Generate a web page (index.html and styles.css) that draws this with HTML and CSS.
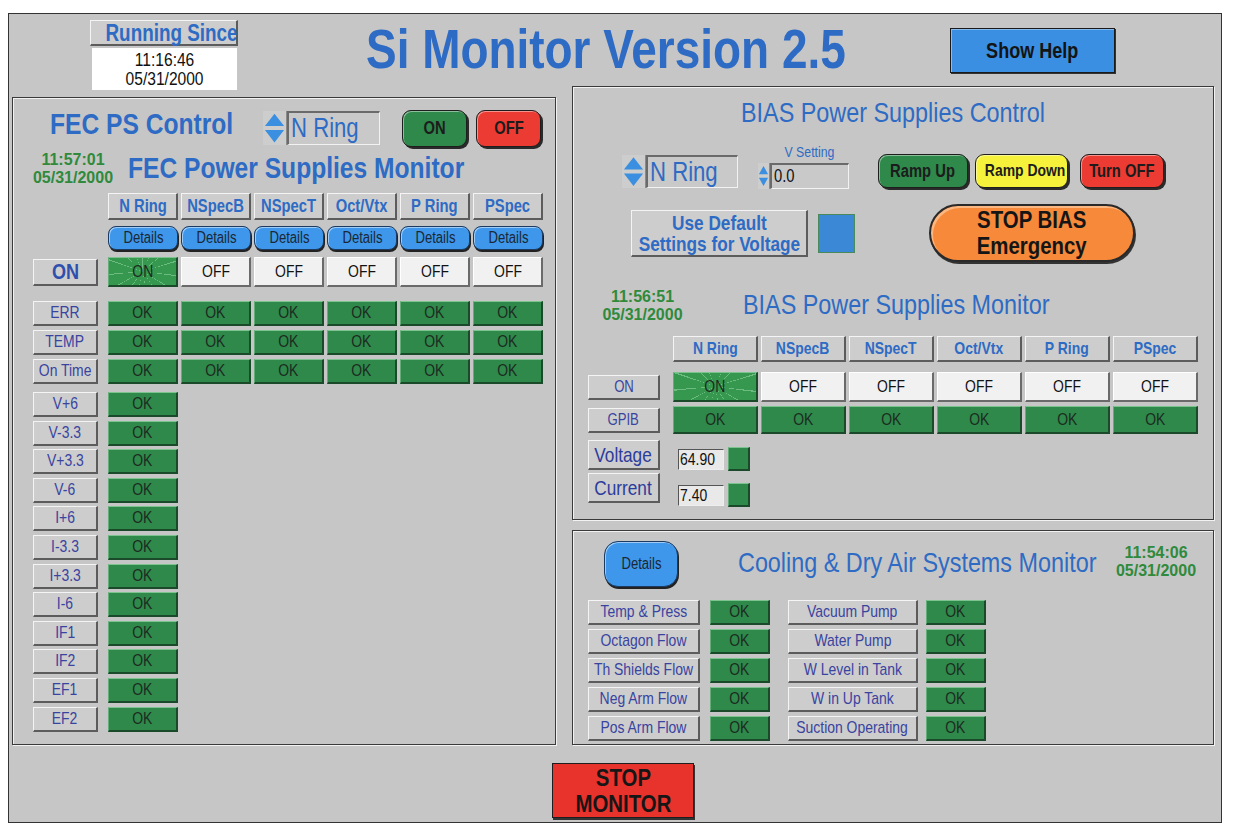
FILE: index.html
```html
<!DOCTYPE html>
<html lang="en">
<head>
    <meta charset="UTF-8">
    <meta name="viewport" content="width=device-width, initial-scale=1.0">
    <title>Si Monitor Version 2.5</title>
    <link rel="stylesheet" href="styles.css">
</head>
<body>
<div class="screen">
    <header class="top">
        <div class="since">
            <div class="since-label"><span class="n">Running Since</span></div>
            <div class="since-time"><span class="n">11:16:46<br>05/31/2000</span></div>
        </div>
        <h1 class="title">Si Monitor Version 2.5</h1>
        <button class="help-btn"><span class="n">Show Help</span></button>
    </header>

    <div class="main">
        <!-- FEC power supplies -->
        <section class="panel fec">
            <div class="fec-control">
                <h2 class="heading">FEC PS Control</h2>
                <div class="selector">
                    <svg class="spin" viewBox="0 0 24 34" width="24" height="34"><path d="M12 2 L22 15 H2 Z" fill="#3b8fe0"/><path d="M2 19 H22 L12 32 Z" fill="#3b8fe0"/></svg>
                    <span class="field"><span class="n">N Ring</span></span>
                </div>
                <button class="pill green fec-on"><span class="n">ON</span></button>
                <button class="pill red fec-off"><span class="n">OFF</span></button>
            </div>

            <div class="monitor-head">
                <div class="stamp">11:57:01<br>05/31/2000</div>
                <h2 class="heading">FEC Power Supplies Monitor</h2>
            </div>

            <div class="ps-table">
                <div class="ps-row head-row">
                    <span></span>
                    <span class="col-head"><span class="n">N Ring</span></span>
                    <span class="col-head"><span class="n">NSpecB</span></span>
                    <span class="col-head"><span class="n">NSpecT</span></span>
                    <span class="col-head"><span class="n">Oct/Vtx</span></span>
                    <span class="col-head"><span class="n">P Ring</span></span>
                    <span class="col-head"><span class="n">PSpec</span></span>
                </div>
                <div class="ps-row details-row">
                    <span></span>
                    <button class="details"><span class="n">Details</span></button>
                    <button class="details"><span class="n">Details</span></button>
                    <button class="details"><span class="n">Details</span></button>
                    <button class="details"><span class="n">Details</span></button>
                    <button class="details"><span class="n">Details</span></button>
                    <button class="details"><span class="n">Details</span></button>
                </div>
                <div class="ps-row on-row">
                    <span class="tag on-tag"><span class="n">ON</span></span>
                    <span class="cell is-on"><span class="n">ON</span></span>
                    <span class="cell off"><span class="n">OFF</span></span>
                    <span class="cell off"><span class="n">OFF</span></span>
                    <span class="cell off"><span class="n">OFF</span></span>
                    <span class="cell off"><span class="n">OFF</span></span>
                    <span class="cell off"><span class="n">OFF</span></span>
                </div>
                <div class="status-rows">
                    <div class="ps-row">
                        <span class="tag"><span class="n">ERR</span></span>
                        <span class="cell ok"><span class="n">OK</span></span><span class="cell ok"><span class="n">OK</span></span><span class="cell ok"><span class="n">OK</span></span>
                        <span class="cell ok"><span class="n">OK</span></span><span class="cell ok"><span class="n">OK</span></span><span class="cell ok"><span class="n">OK</span></span>
                    </div>
                    <div class="ps-row">
                        <span class="tag"><span class="n">TEMP</span></span>
                        <span class="cell ok"><span class="n">OK</span></span><span class="cell ok"><span class="n">OK</span></span><span class="cell ok"><span class="n">OK</span></span>
                        <span class="cell ok"><span class="n">OK</span></span><span class="cell ok"><span class="n">OK</span></span><span class="cell ok"><span class="n">OK</span></span>
                    </div>
                    <div class="ps-row">
                        <span class="tag"><span class="n">On Time</span></span>
                        <span class="cell ok"><span class="n">OK</span></span><span class="cell ok"><span class="n">OK</span></span><span class="cell ok"><span class="n">OK</span></span>
                        <span class="cell ok"><span class="n">OK</span></span><span class="cell ok"><span class="n">OK</span></span><span class="cell ok"><span class="n">OK</span></span>
                    </div>
                </div>
                <div class="volt-rows">
                    <div class="ps-row"><span class="tag"><span class="n">V+6</span></span><span class="cell ok"><span class="n">OK</span></span></div>
                    <div class="ps-row"><span class="tag"><span class="n">V-3.3</span></span><span class="cell ok"><span class="n">OK</span></span></div>
                    <div class="ps-row"><span class="tag"><span class="n">V+3.3</span></span><span class="cell ok"><span class="n">OK</span></span></div>
                    <div class="ps-row"><span class="tag"><span class="n">V-6</span></span><span class="cell ok"><span class="n">OK</span></span></div>
                    <div class="ps-row"><span class="tag"><span class="n">I+6</span></span><span class="cell ok"><span class="n">OK</span></span></div>
                    <div class="ps-row"><span class="tag"><span class="n">I-3.3</span></span><span class="cell ok"><span class="n">OK</span></span></div>
                    <div class="ps-row"><span class="tag"><span class="n">I+3.3</span></span><span class="cell ok"><span class="n">OK</span></span></div>
                    <div class="ps-row"><span class="tag"><span class="n">I-6</span></span><span class="cell ok"><span class="n">OK</span></span></div>
                    <div class="ps-row"><span class="tag"><span class="n">IF1</span></span><span class="cell ok"><span class="n">OK</span></span></div>
                    <div class="ps-row"><span class="tag"><span class="n">IF2</span></span><span class="cell ok"><span class="n">OK</span></span></div>
                    <div class="ps-row"><span class="tag"><span class="n">EF1</span></span><span class="cell ok"><span class="n">OK</span></span></div>
                    <div class="ps-row"><span class="tag"><span class="n">EF2</span></span><span class="cell ok"><span class="n">OK</span></span></div>
                </div>
            </div>
        </section>

        <div class="right">
            <!-- BIAS power supplies -->
            <section class="panel bias">
                <h2 class="heading light center">BIAS Power Supplies Control</h2>

                <div class="bias-control">
                    <div class="selector bias-select">
                        <svg class="spin" viewBox="0 0 24 34" width="24" height="33"><path d="M12 2 L22 15 H2 Z" fill="#3b8fe0"/><path d="M2 19 H22 L12 32 Z" fill="#3b8fe0"/></svg>
                        <span class="field"><span class="n">N Ring</span></span>
                    </div>
                    <div class="vset">
                        <div class="vset-label"><span class="n">V Setting</span></div>
                        <div class="vset-input">
                            <svg class="spin small" viewBox="0 0 12 26" width="12" height="26"><path d="M6 2 L11 11 H1 Z" fill="#3b8fe0"/><path d="M1 15 H11 L6 24 Z" fill="#3b8fe0"/></svg>
                            <span class="field small"><span class="n">0.0</span></span>
                        </div>
                    </div>
                    <button class="pill green ramp-up"><span class="n">Ramp Up</span></button>
                    <button class="pill yellow ramp-down"><span class="n">Ramp Down</span></button>
                    <button class="pill red turn-off"><span class="n">Turn OFF</span></button>
                </div>

                <div class="bias-actions">
                    <div class="tag defaults"><span class="n">Use Default<br>Settings for Voltage</span></div>
                    <span class="check"></span>
                    <button class="stop-bias"><span class="n">STOP BIAS<br>Emergency</span></button>
                </div>

                <div class="monitor-head bias-head">
                    <div class="stamp">11:56:51<br>05/31/2000</div>
                    <h2 class="heading light">BIAS Power Supplies Monitor</h2>
                </div>

                <div class="bias-table">
                    <div class="bias-row head-row">
                        <span></span>
                        <span class="col-head"><span class="n">N Ring</span></span>
                        <span class="col-head"><span class="n">NSpecB</span></span>
                        <span class="col-head"><span class="n">NSpecT</span></span>
                        <span class="col-head"><span class="n">Oct/Vtx</span></span>
                        <span class="col-head"><span class="n">P Ring</span></span>
                        <span class="col-head"><span class="n">PSpec</span></span>
                    </div>
                    <div class="bias-row on-row">
                        <span class="tag"><span class="n">ON</span></span>
                        <span class="cell is-on"><span class="n">ON</span></span>
                        <span class="cell off"><span class="n">OFF</span></span>
                        <span class="cell off"><span class="n">OFF</span></span>
                        <span class="cell off"><span class="n">OFF</span></span>
                        <span class="cell off"><span class="n">OFF</span></span>
                        <span class="cell off"><span class="n">OFF</span></span>
                    </div>
                    <div class="bias-row gpib-row">
                        <span class="tag"><span class="n">GPIB</span></span>
                        <span class="cell ok"><span class="n">OK</span></span><span class="cell ok"><span class="n">OK</span></span><span class="cell ok"><span class="n">OK</span></span>
                        <span class="cell ok"><span class="n">OK</span></span><span class="cell ok"><span class="n">OK</span></span><span class="cell ok"><span class="n">OK</span></span>
                    </div>
                </div>

                <div class="reading voltage">
                    <span class="tag big-tag"><span class="n">Voltage</span></span>
                    <span class="value"><span class="n">64.90</span></span>
                    <span class="led"></span>
                </div>
                <div class="reading current">
                    <span class="tag big-tag"><span class="n">Current</span></span>
                    <span class="value"><span class="n">7.40</span></span>
                    <span class="led"></span>
                </div>
            </section>

            <!-- cooling and dry air -->
            <section class="panel cooling">
                <div class="cool-head">
                    <button class="details big-details"><span class="n">Details</span></button>
                    <h2 class="heading light cool-title">Cooling &amp; Dry Air Systems Monitor</h2>
                    <div class="stamp">11:54:06<br>05/31/2000</div>
                </div>
                <div class="cool-rows">
                    <div class="cool-row">
                        <span class="tag c1"><span class="n">Temp &amp; Press</span></span><span class="cell ok"><span class="n">OK</span></span>
                        <span class="tag c2"><span class="n">Vacuum Pump</span></span><span class="cell ok"><span class="n">OK</span></span>
                    </div>
                    <div class="cool-row">
                        <span class="tag c1"><span class="n">Octagon Flow</span></span><span class="cell ok"><span class="n">OK</span></span>
                        <span class="tag c2"><span class="n">Water Pump</span></span><span class="cell ok"><span class="n">OK</span></span>
                    </div>
                    <div class="cool-row">
                        <span class="tag c1"><span class="n">Th Shields Flow</span></span><span class="cell ok"><span class="n">OK</span></span>
                        <span class="tag c2"><span class="n">W Level in Tank</span></span><span class="cell ok"><span class="n">OK</span></span>
                    </div>
                    <div class="cool-row">
                        <span class="tag c1"><span class="n">Neg Arm Flow</span></span><span class="cell ok"><span class="n">OK</span></span>
                        <span class="tag c2"><span class="n">W in Up Tank</span></span><span class="cell ok"><span class="n">OK</span></span>
                    </div>
                    <div class="cool-row">
                        <span class="tag c1"><span class="n">Pos Arm Flow</span></span><span class="cell ok"><span class="n">OK</span></span>
                        <span class="tag c2"><span class="n">Suction Operating</span></span><span class="cell ok"><span class="n">OK</span></span>
                    </div>
                </div>
            </section>
        </div>
    </div>

    <footer class="bottom">
        <button class="stop-monitor"><span class="n">STOP<br>MONITOR</span></button>
    </footer>
</div>
</body>
</html>
```

FILE: styles.css
```css
body {
    margin: 0;
    background: #fff;
    font-family: "Liberation Sans", Arial, sans-serif;
    color: #222;
}

* {
    box-sizing: border-box;
}

button {
    font-family: inherit;
    padding: 0;
    cursor: pointer;
    white-space: nowrap;
}

h1, h2 {
    margin: 0;
}

/* the panel font is a narrow helvetica, so squeeze the text */
.n {
    display: inline-block;
    transform: scaleX(0.82);
    white-space: nowrap;
}

.screen {
    width: 1214px;
    height: 810px;
    margin: 13px 0 0 8px;
    border: 1px solid #333;
    background: #c6c6c6;
}

/* shared bevels */
.tag, .col-head {
    display: flex;
    align-items: center;
    justify-content: center;
    background: #cdcdcd;
    border-style: solid;
    border-width: 1px 2px 2px 1px;
    border-color: #f4f4f4 #5c5c5c #5c5c5c #f4f4f4;
    color: #3944a0;
    font-size: 17px;
    white-space: nowrap;
}

.col-head {
    color: #2e6bc4;
    font-weight: bold;
    font-size: 18px;
}

.cell {
    display: flex;
    align-items: center;
    justify-content: center;
    border-style: solid;
    border-width: 1px 2px 2px 1px;
    font-size: 17px;
}

.ok {
    background: #2e894b;
    border-color: #7cc390 #1b4a2a #1b4a2a #62ad78;
    color: #1d2b20;
}

.off {
    background: #f1f1f1;
    border-color: #fff #6a6a6a #6a6a6a #fff;
    color: #111;
}

.is-on {
    background: #36974f repeating-conic-gradient(from 0deg at 50% 50%, rgba(210, 255, 220, 0.35) 0 2deg, transparent 2deg 24deg);
    border-color: #7cc390 #1b4a2a #1b4a2a #62ad78;
    color: #1d2b20;
}

.heading {
    color: #2e6bc4;
    font-weight: bold;
    font-size: 30px;
    line-height: 30px;
    white-space: nowrap;
    transform: scaleX(0.82);
    transform-origin: left center;
}

.heading.light {
    font-weight: normal;
    font-size: 28.5px;
    line-height: 30px;
}

.heading.center {
    text-align: center;
    transform-origin: center;
}

.stamp {
    color: #2f8a3c;
    font-weight: bold;
    font-size: 16px;
    line-height: 18px;
    text-align: center;
    white-space: nowrap;
}

.panel {
    border: 1px solid #3a3a3a;
    box-shadow: inset 1px 1px 0 #f2f2f2, 1px 1px 0 #f2f2f2;
}

/* spinner + text field */
.selector {
    display: flex;
    height: 34px;
}

.spin {
    display: block;
    background: #cdcdcd;
    border-right: 1px solid #8a8a8a;
}

.field {
    display: flex;
    align-items: center;
    padding-left: 2px;
    background: #c9c9c9;
    border-style: solid;
    border-width: 2px 1px 1px 2px;
    border-color: #6a6a6a #f2f2f2 #f2f2f2 #6a6a6a;
    color: #2e6bc4;
    font-size: 27px;
}

.field .n {
    transform-origin: left center;
}

.field.small {
    width: 79px;
    font-size: 18px;
    color: #111;
}

.pill {
    border: 1px solid #1e1e1e;
    border-radius: 9px;
    box-shadow: 2px 2px 0 #2a2a2a, inset 1px 1px 0 rgba(255, 255, 255, 0.45);
    font-weight: bold;
    font-size: 18px;
    color: #1c1c1c;
}

.green { background: #2e894b; }
.red { background: #ec3b32; }
.yellow { background: #f6f23c; }

.details {
    border: 1px solid #1d3a60;
    border-radius: 8px;
    background: #3e97ea;
    box-shadow: 1px 2px 0 #222, inset 1px 1px 0 rgba(255, 255, 255, 0.5);
    color: #1b2735;
    font-size: 16px;
}

/* header */
.top {
    display: flex;
    align-items: flex-start;
    height: 72px;
    padding-left: 81px;
}

.since {
    width: 148px;
    margin-top: 6px;
}

.since-label {
    height: 26px;
    line-height: 24px;
    text-align: center;
    white-space: nowrap;
    background: #cdcdcd;
    border-style: solid;
    border-width: 1px 2px 2px 1px;
    border-color: #f4f4f4 #5c5c5c #5c5c5c #f4f4f4;
    color: #2e6bc4;
    font-weight: bold;
    font-size: 23px;
}

.since-time {
    height: 42px;
    margin: 2px 1px 0 2px;
    padding-top: 2px;
    background: #fff;
    text-align: center;
    font-size: 19px;
    line-height: 19px;
    color: #111;
}

.title {
    width: 584px;
    margin: 7px 0 0 128px;
    color: #2e6bc4;
    font-size: 56px;
    line-height: 56px;
    white-space: nowrap;
    transform: scaleX(0.82);
    transform-origin: left center;
}

.help-btn {
    width: 165px;
    height: 45px;
    margin-top: 14px;
    background: #3a8fe3;
    border: 1px solid #1a1a1a;
    box-shadow: 1px 1px 0 #333, inset 1px 1px 0 rgba(255, 255, 255, 0.4);
    font-weight: bold;
    font-size: 22px;
    color: #141414;
}

/* main area */
.main {
    display: flex;
    gap: 16px;
    padding-left: 3px;
}

.fec {
    width: 544px;
    height: 648px;
    margin-top: 11px;
}

.right {
    display: flex;
    flex-direction: column;
    gap: 10px;
    width: 642px;
}

.bias {
    height: 434px;
}

.cooling {
    height: 215px;
}

/* FEC panel */
.fec-control {
    display: flex;
    align-items: flex-start;
    margin-top: 12px;
    padding-left: 37px;
}

.fec-control .heading {
    width: 213px;
    margin-top: -1px;
}

.fec-control .selector {
    margin-top: 1px;
}

.fec-control .field {
    width: 93px;
}

.fec-on, .fec-off {
    width: 65px;
    height: 37px;
}

.fec-on {
    margin-left: 22px;
}

.fec-off {
    margin-left: 9px;
}

.monitor-head {
    display: flex;
    align-items: flex-start;
    margin-top: 4px;
    padding-left: 19px;
}

.monitor-head .stamp {
    width: 82px;
}

.monitor-head .heading {
    margin: 2px 0 0 14px;
}

.ps-table {
    margin-top: 6px;
    padding-left: 20px;
}

.ps-row {
    display: grid;
    grid-template-columns: 72px repeat(6, 70px);
    column-gap: 3px;
}

.ps-row .tag {
    width: 65px;
}

.ps-table .head-row {
    height: 27px;
}

.ps-table .details-row {
    height: 24px;
    margin-top: 6px;
}

.ps-table .on-row {
    height: 30px;
    margin-top: 7px;
    align-items: center;
}

.ps-table .on-row .cell {
    height: 30px;
}

.on-tag {
    height: 27px;
    font-weight: bold;
    font-size: 22px;
    color: #2f4fae;
}

.status-rows {
    display: flex;
    flex-direction: column;
    gap: 4px;
    margin-top: 14px;
}

.status-rows .ps-row,
.volt-rows .ps-row {
    height: 25px;
}

.volt-rows {
    display: flex;
    flex-direction: column;
    gap: 3.6px;
    margin-top: 8px;
}

/* BIAS panel */
.bias > .heading {
    margin-top: 9px;
    line-height: 32px;
}

.bias-control {
    display: flex;
    align-items: flex-start;
    margin-top: 16px;
    padding-left: 49px;
}

.bias-select {
    height: 33px;
    margin-top: 11px;
}

.bias-select .field {
    width: 92px;
}

.vset {
    width: 93px;
    margin-left: 20px;
}

.vset-label {
    height: 15px;
    padding-left: 10px;
    text-align: center;
    color: #2e6bc4;
    font-size: 15px;
    line-height: 15px;
}

.vset-input {
    display: flex;
    height: 26px;
    margin-top: 4px;
}

.ramp-up, .ramp-down, .turn-off {
    height: 34px;
    margin-top: 10px;
}

.ramp-up {
    width: 90px;
    margin-left: 27px;
}

.ramp-down {
    width: 93px;
    margin-left: 7px;
    font-size: 17px;
}

.turn-off {
    width: 84px;
    margin-left: 12px;
}

.bias-actions {
    display: flex;
    align-items: center;
    height: 58px;
    margin-top: 15px;
    padding-left: 58px;
}

.defaults {
    width: 177px;
    height: 47px;
    color: #2e6bc4;
    font-weight: bold;
    font-size: 21px;
    line-height: 21px;
    text-align: center;
}

.check {
    width: 37px;
    height: 39px;
    margin-left: 10px;
    background: #3a88d6;
    border: 1px solid #4a8a5a;
}

.stop-bias {
    width: 206px;
    height: 58px;
    margin-left: 74px;
    background: #f7893a;
    border: 2px solid #2a2a2a;
    border-radius: 29px;
    box-shadow: 1px 2px 0 #333, inset 2px 2px 0 rgba(255, 230, 200, 0.5);
    font-weight: bold;
    font-size: 24px;
    line-height: 26px;
    color: #151515;
}

.stop-bias .n,
.stop-monitor .n {
    transform: scaleX(0.85);
}

.bias-head {
    margin-top: 26px;
    padding-left: 28px;
}

.bias-head .stamp {
    width: 83px;
}

.bias-head .heading {
    margin: 1px 0 0 59px;
}

.bias-table {
    margin-top: 12px;
    padding-left: 15px;
}

.bias-row {
    display: grid;
    grid-template-columns: 82px repeat(6, 85px);
    column-gap: 3px;
    align-items: center;
}

.bias-row .tag {
    width: 72px;
    height: 25px;
    font-size: 16px;
}

.bias-table .head-row {
    height: 26px;
}

.bias-table .col-head {
    font-size: 17px;
    height: 26px;
}

.bias-table .on-row {
    height: 30px;
    margin-top: 10px;
}

.bias-table .on-row .cell {
    height: 30px;
}

.bias-table .gpib-row {
    height: 28px;
    margin-top: 4px;
}

.bias-table .gpib-row .cell {
    height: 28px;
}

.reading {
    display: flex;
    align-items: flex-start;
    height: 30px;
    padding-left: 15px;
}

.voltage {
    margin-top: 6px;
}

.current {
    margin-top: 3px;
}

.big-tag {
    width: 72px;
    height: 30px;
    color: #2c3c9c;
    font-size: 21px;
}

.value {
    width: 46px;
    height: 21px;
    margin-left: 18px;
    padding-left: 1px;
    background: #e9e9e9;
    border: 1px solid;
    border-color: #555 #eee #eee #555;
    font-size: 17px;
    line-height: 19px;
    color: #111;
}

.value .n {
    transform-origin: left center;
}

.led {
    width: 22px;
    height: 24px;
    margin-left: 4px;
    background: #2e894b;
    border-style: solid;
    border-width: 1px 2px 2px 1px;
    border-color: #7cc390 #1b4a2a #1b4a2a #62ad78;
}

.voltage .value { margin-top: 9px; }
.voltage .led { margin-top: 7px; }
.current .value { margin-top: 12px; }
.current .led { margin-top: 10px; }

/* cooling panel */
.cool-head {
    display: flex;
    align-items: flex-start;
    height: 46px;
    margin-top: 10px;
    padding-left: 31px;
}

.big-details {
    width: 74px;
    height: 46px;
    border-radius: 14px;
}

.cool-title {
    width: 376px;
    margin: 6px 0 0 60px;
}

.cool-head .stamp {
    width: 84px;
    margin-top: 3px;
}

.cool-rows {
    display: flex;
    flex-direction: column;
    gap: 4px;
    margin-top: 13px;
    padding-left: 15px;
}

.cool-row {
    display: flex;
    height: 25px;
}

.cool-row .cell {
    width: 60px;
    margin-left: 10px;
}

.cool-row .c1 {
    width: 112px;
}

.cool-row .c2 {
    width: 130px;
    margin-left: 18px;
}

.cool-row .c2 + .cell {
    margin-left: 8px;
}

/* footer */
.bottom {
    padding: 18px 0 0 543px;
}

.stop-monitor {
    width: 142px;
    height: 55px;
    background: #e8322c;
    border: 1px solid #1e1e1e;
    box-shadow: 1px 2px 0 #333;
    font-weight: bold;
    font-size: 24px;
    line-height: 26px;
    color: #161616;
}
```
